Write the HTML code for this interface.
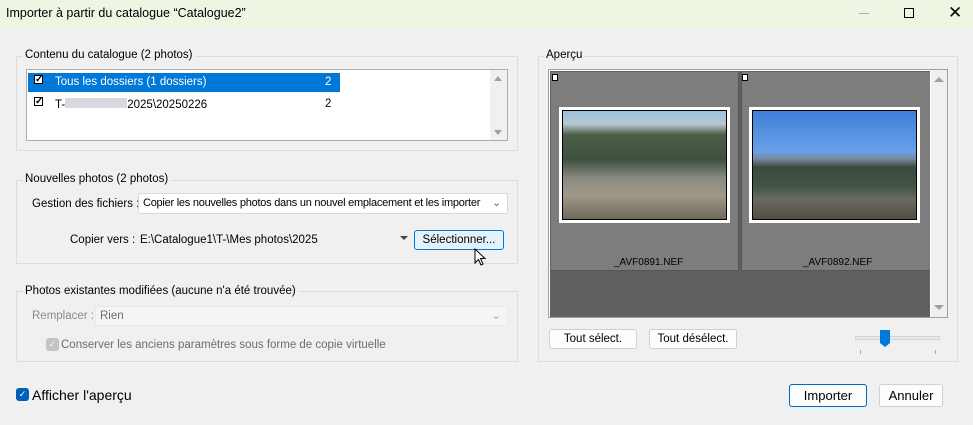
<!DOCTYPE html>
<html><head><meta charset="utf-8"><style>
*{margin:0;padding:0;box-sizing:border-box}
body{width:973px;height:425px;background:#f0f0f0;font-family:"Liberation Sans",sans-serif;font-size:11.5px;color:#000;position:relative;overflow:hidden}
.a{position:absolute;white-space:nowrap}
.grp{position:absolute;border:1px solid #dcdcdc}
.leg{position:absolute;background:#f0f0f0;padding:0 2px;font-size:11.5px}
.btn{position:absolute;background:#fdfdfd;border:1px solid #d0d0d0;border-radius:3px;text-align:center;font-size:11.5px;white-space:nowrap}
.dd{position:absolute;background:#fff;border:1px solid #d9d9d9;border-radius:2px;font-size:11.5px;padding-left:4px;white-space:nowrap;overflow:hidden}
.photo{position:absolute;background:#fff;padding:3px}
.photo div{width:100%;height:100%;border:1px solid #000}
</style></head><body>
<div class="a" style="left:0;top:0;width:973px;height:28px;background:#edf6e3"></div>
<div class="a" style="left:6px;top:6px;font-size:12.5px">Importer à partir du catalogue “Catalogue2”</div>
<div class="a" style="left:859px;top:13px;width:10px;height:1px;background:#aaa"></div>
<div class="a" style="left:904px;top:8px;width:10px;height:10px;border:1.3px solid #000"></div>
<div class="a" style="left:948px;top:3px;font-size:17px;font-weight:300">✕</div>

<div class="grp" style="left:16px;top:56px;width:502px;height:95px"></div>
<div class="leg" style="left:23px;top:49px">Contenu du catalogue (2 photos)</div>
<div class="a" style="left:26px;top:69px;width:482px;height:72px;background:#fff;border:1px solid #adadad"></div>
<div class="a" style="left:490px;top:70px;width:17px;height:70px;background:#f0f0f0"></div>
<div class="a" style="left:494px;top:76px;width:0;height:0;border:4px solid transparent;border-bottom:5px solid #a0a0a0;border-top:0"></div>
<div class="a" style="left:494px;top:130px;width:0;height:0;border:4px solid transparent;border-top:5px solid #a0a0a0;border-bottom:0"></div>
<div class="a" style="left:28px;top:73px;width:312px;height:19px;background:#0078d7"></div>
<div class="a" style="left:34px;top:75px;width:9px;height:9px;border:1px solid #000;background:#fff;font-size:10px;line-height:7px;font-weight:bold">✓</div>
<div class="a" style="left:55px;top:76px;color:#fff">Tous les dossiers (1 dossiers)</div>
<div class="a" style="left:325px;top:76px;color:#fff">2</div>
<div class="a" style="left:34px;top:97px;width:9px;height:9px;border:1px solid #000;background:#fff;font-size:10px;line-height:7px;font-weight:bold">✓</div>
<div class="a" style="left:55px;top:98px">T-<span style="display:inline-block;width:62px;height:10px;background:#d8d8e0"></span>2025\20250226</div>
<div class="a" style="left:325px;top:98px">2</div>

<div class="grp" style="left:16px;top:180px;width:502px;height:84px"></div>
<div class="leg" style="left:23px;top:173px">Nouvelles photos (2 photos)</div>
<div class="a" style="left:32px;top:198px">Gestion des fichiers :</div>
<div class="dd" style="left:138px;top:193px;width:370px;height:21px;line-height:19px;font-size:11px;letter-spacing:-0.25px">Copier les nouvelles photos dans un nouvel emplacement et les importer<span style="position:absolute;right:6px;top:0;color:#666;background:#fff;padding-left:4px">⌄</span></div>
<div class="a" style="left:70px;top:234px">Copier vers :</div>
<div class="a" style="left:140px;top:234px">E:\Catalogue1\T-\Mes photos\2025</div>
<div class="a" style="left:400px;top:236px;border:4px solid transparent;border-top:4px solid #444;border-bottom:0"></div>
<div class="btn" style="left:414px;top:230px;width:90px;height:20px;line-height:18px;background:#e5f1fb;border-color:#0078d7">Sélectionner...</div>
<svg class="a" style="left:474px;top:248px" width="14" height="20" viewBox="0 0 14 20"><path d="M1 1 L1 15 L4.5 11.5 L7 17 L9 16 L6.5 10.5 L11 10.5 Z" fill="#fff" stroke="#000" stroke-width="1"/></svg>

<div class="grp" style="left:16px;top:291px;width:502px;height:71px"></div>
<div class="leg" style="left:23px;top:285px">Photos existantes modifiées (aucune n'a été trouvée)</div>
<div class="a" style="left:32px;top:310px;color:#8a8a8a">Remplacer :</div>
<div class="dd" style="left:95px;top:306px;width:413px;height:20px;line-height:18px;background:#f5f5f5;border-color:#eaeaea;color:#6d6d6d">Rien<span style="position:absolute;right:6px;top:0;color:#aaa">⌄</span></div>
<div class="a" style="left:46px;top:338px;width:13px;height:13px;background:#c4c4c4;border-radius:3px;color:#fff;font-size:9px;text-align:center;line-height:13px">✓</div>
<div class="a" style="left:61px;top:339px;color:#6d6d6d">Conserver les anciens paramètres sous forme de copie virtuelle</div>

<div class="a" style="left:16px;top:388px;width:13px;height:13px;background:#005fb8;border-radius:3px;color:#fff;font-size:9px;text-align:center;line-height:13px">✓</div>
<div class="a" style="left:32px;top:387px;font-size:14px">Afficher l'aperçu</div>

<div class="grp" style="left:538px;top:56px;width:420px;height:306px"></div>
<div class="leg" style="left:544px;top:49px">Aperçu</div>
<div class="a" style="left:548px;top:69px;width:400px;height:249px;background:#fff;border:1px solid #a0a0a0"></div>
<div class="a" style="left:550px;top:71px;width:380px;height:246px;background:#606060"></div>
<div class="a" style="left:551px;top:72px;width:188px;height:199px;background:#7d7d7d;border-right:1px solid #555;border-bottom:1px solid #555"></div>
<div class="a" style="left:741px;top:72px;width:189px;height:199px;background:#7d7d7d;border-bottom:1px solid #555;border-left:1px solid #555"></div>
<div class="a" style="left:552px;top:74px;width:6px;height:7px;background:#fff;border:1px solid #000"></div>
<div class="a" style="left:742px;top:74px;width:6px;height:7px;background:#fff;border:1px solid #000"></div>
<div class="photo" style="left:559px;top:107px;width:171px;height:116px"><div style="background:linear-gradient(180deg,#9cc0e0 0%,#b8c8d0 12%,#4d5e48 22%,#3f5040 45%,#8a8a80 62%,#a09888 78%,#706a5c 100%)"></div></div>
<div class="photo" style="left:749px;top:107px;width:171px;height:116px"><div style="background:linear-gradient(180deg,#3f7fd8 0%,#6aa0e8 38%,#7a8aa0 44%,#3a4a3c 52%,#445444 70%,#6a6a60 82%,#554d44 100%)"></div></div>
<div class="a" style="left:614px;top:257px;font-size:10px">_AVF0891.NEF</div>
<div class="a" style="left:803px;top:257px;font-size:10px">_AVF0892.NEF</div>
<div class="a" style="left:931px;top:70px;width:16px;height:247px;background:#f0f0f0"></div>
<div class="a" style="left:934px;top:77px;border:5px solid transparent;border-bottom:5px solid #a0a0a0;border-top:0"></div>
<div class="a" style="left:934px;top:305px;border:5px solid transparent;border-top:5px solid #a0a0a0;border-bottom:0"></div>
<div class="btn" style="left:549px;top:329px;width:88px;height:20px;line-height:18px">Tout sélect.</div>
<div class="btn" style="left:649px;top:329px;width:88px;height:20px;line-height:18px">Tout désélect.</div>
<div class="a" style="left:855px;top:336px;width:85px;height:4px;background:#e6e6e6;border:1px solid #d6d6d6"></div>
<div class="a" style="left:880px;top:330px;width:10px;height:13px;background:#0078d7"></div>
<div class="a" style="left:880px;top:343px;border:5px solid transparent;border-top:4px solid #0078d7;border-bottom:0"></div>
<div class="a" style="left:860px;top:350px;width:1px;height:4px;background:#aaa"></div>
<div class="a" style="left:935px;top:350px;width:1px;height:4px;background:#aaa"></div>

<div class="btn" style="left:789px;top:384px;width:78px;height:23px;line-height:21px;border-color:#0067c0;font-size:13px">Importer</div>
<div class="btn" style="left:879px;top:384px;width:64px;height:23px;line-height:21px;font-size:13px">Annuler</div>
</body></html>
